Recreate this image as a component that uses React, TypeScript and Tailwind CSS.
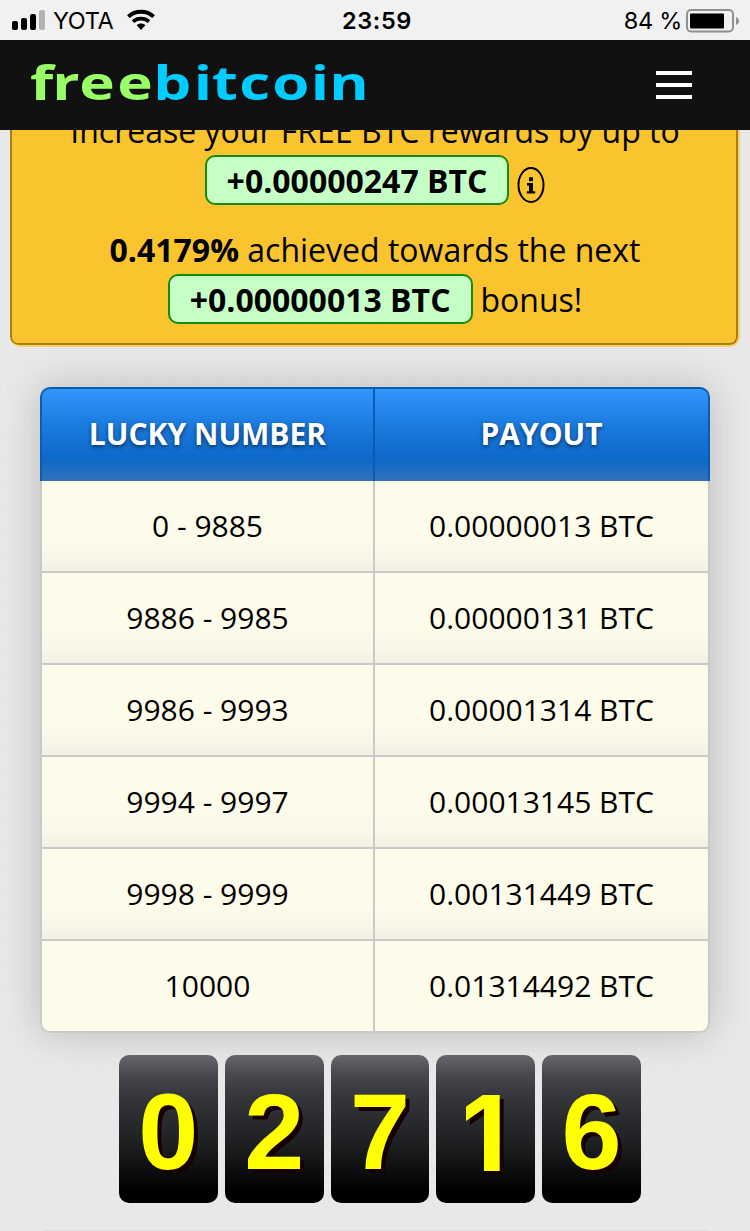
import React from "react";

const payouts: [string, string][] = [
  ["0 - 9885", "0.00000013 BTC"],
  ["9886 - 9985", "0.00000131 BTC"],
  ["9986 - 9993", "0.00001314 BTC"],
  ["9994 - 9997", "0.00013145 BTC"],
  ["9998 - 9999", "0.00131449 BTC"],
  ["10000", "0.01314492 BTC"],
];

const digits = ["0", "2", "7", "1", "6"];

function StatusBar() {
  return (
    <div className="grid h-10 shrink-0 grid-cols-3 items-center bg-[#f1f1f1] font-['Inter',sans-serif] text-[23.5px] text-black">
      <div className="flex items-center pl-3">
        <svg width="34" height="22" viewBox="0 0 34 22" className="shrink-0">
          <rect x="0" y="12" width="6" height="9" rx="2" />
          <rect x="9" y="9" width="6" height="12" rx="2" />
          <rect x="18" y="5" width="6" height="16" rx="2" />
          <rect x="27" y="1" width="6" height="20" rx="2" fill="#b3b3b3" />
        </svg>
        <span className="ml-[7px] w-[61px] pt-0.5 whitespace-nowrap tracking-[-0.4px]">YOTA</span>
        <svg width="30" height="22" viewBox="0 0 30 22" className="ml-3 shrink-0">
          <path d="M2.4 7.6C9.4 1.2 20.6 1.2 27.6 7.6" fill="none" stroke="#000" strokeWidth="3.9" />
          <path d="M7 12.6C11.5 8.7 18.5 8.7 23 12.6" fill="none" stroke="#000" strokeWidth="3.7" />
          <path d="M10.6 16.3C13 14 17 14 19.4 16.3L15 21Z" />
        </svg>
      </div>
      <div className="pt-0.5 pl-1 text-center font-semibold tracking-[0.6px]">23:59</div>
      <div className="flex items-center justify-end pr-2.5">
        <span className="mr-1 pt-0.5 whitespace-nowrap tracking-[-0.3px]">84 %</span>
        <svg width="54" height="24" viewBox="0 0 54 24" className="mt-0.5 shrink-0">
          <rect x="1" y="1" width="46" height="21.5" rx="4" fill="none" stroke="#909090" strokeWidth="2" />
          <rect x="4" y="4.5" width="34" height="15" rx="1" />
          <path d="M50 8C54 9.5 54 14.5 50 16Z" fill="#909090" />
        </svg>
      </div>
    </div>
  );
}

function Header() {
  return (
    <header className="flex h-[90px] shrink-0 items-center justify-between bg-[#111] pl-[30px] pr-[58px]">
      <svg
        width="345"
        height="80"
        viewBox="0 0 345 80"
        className="overflow-visible font-['Open_Sans',sans-serif] text-[47px] font-bold"
      >
        <g transform="scale(1.28 1)">
          <text x="0 17.4 38.5 68.2" y="55" fill="#99ff66">
            free
          </text>
          <text x="96.3 128 142 163.5 189.3 219.4 233.8" y="55" fill="#00ccff">
            bitcoin
          </text>
        </g>
      </svg>
      <div className="flex w-9 flex-col gap-2">
        <span className="h-1 bg-white" />
        <span className="h-1 bg-white" />
        <span className="h-1 bg-white" />
      </div>
    </header>
  );
}

function Badge({ children }: { children: React.ReactNode }) {
  return (
    <b className="flex h-[50px] items-center rounded-[10px] border-2 border-[#188a0c] bg-[#c6ffc6] px-5 pt-0.5">
      {children}
    </b>
  );
}

function BonusCard() {
  return (
    <section className="mx-2.5 h-[217px] shrink-0 overflow-hidden rounded-b-[10px] border-r-2 border-b-2 border-[#fcd068] bg-[#fcd068]">
      <div className="h-[215px] overflow-hidden rounded-b-[8px] border-2 border-t-0 border-[#a87f16] bg-[#fac42f] pl-0.5 text-[32px] text-black">
        <div className="-mt-[25px] flex h-[50px] items-center justify-center pt-0.5 whitespace-nowrap">
          Increase your FREE BTC rewards by up to
        </div>
        <div className="flex h-[50px] items-center justify-center gap-2">
          <Badge>+0.00000247 BTC</Badge>
          <svg width="28" height="36" viewBox="0 0 28 36" className="mt-2.5">
            <ellipse cx="14" cy="18" rx="12.5" ry="17" fill="none" stroke="#000" strokeWidth="2" />
            <path d="M12 10.2h4v4h-4zM10 16h6v8.2h2.2v2.3H9.8v-2.3H12v-5.8h-2z" />
          </svg>
        </div>
        <div className="mt-[19px] flex h-[50px] items-center justify-center pt-0.5 whitespace-pre">
          <b>0.4179%</b> achieved towards the next
        </div>
        <div className="flex h-[50px] items-center justify-center gap-2">
          <Badge>+0.00000013 BTC</Badge>
          <span className="pt-0.5">bonus!</span>
        </div>
      </div>
    </section>
  );
}

function PayoutTable() {
  return (
    <section className="mx-10 mt-10 shrink-0 rounded-[10px] text-[30px] text-black shadow-[0_0_40px_rgba(0,0,0,0.2)]">
      <div className="grid h-[94px] grid-cols-[333px_333px] rounded-t-[10px] border-2 border-b-0 border-[#0b5cb0] bg-[linear-gradient(180deg,#3396fb_0%,#1b7ce0_38%,#0d68c8_76%,#3173ba_100%)] font-bold text-white [text-shadow:0_2px_4px_rgba(0,0,0,0.55)]">
        <div className="flex items-center justify-center border-r-2 border-[#0b5cb0] pb-1">LUCKY NUMBER</div>
        <div className="flex items-center justify-center pb-1">PAYOUT</div>
      </div>
      <div className="overflow-hidden rounded-b-[10px] border-x-2 border-b-2 border-[#c9c9c9]">
        {payouts.map(([range, amount], i) => (
          <div
            key={range}
            className={
              i === payouts.length - 1
                ? "grid h-[90px] grid-cols-[333px_333px] bg-[#fdfbea]"
                : "grid h-[92px] grid-cols-[333px_333px] border-b-2 border-[#c9c9c9] bg-[#fdfbea] bg-[linear-gradient(180deg,#fdfbea_0%,#fdfbea_60%,#f9f7e8_85%,#f2f0e3_100%)]"
            }
          >
            <div className="flex items-center justify-center border-r-2 border-[#c9c9c9] pb-0.5">{range}</div>
            <div className="flex items-center justify-center pb-0.5">{amount}</div>
          </div>
        ))}
      </div>
    </section>
  );
}

function Roll() {
  return (
    <div className="mt-[22px] ml-[119px] grid w-[522px] shrink-0 grid-cols-5 gap-[7px] font-['Liberation_Sans',sans-serif] text-[108px] leading-none font-bold text-[#ffff00]">
      {digits.map((d, i) => (
        <div
          key={i}
          className="flex h-[148px] items-center justify-center rounded-[10px] bg-[linear-gradient(180deg,#66676c_0%,#45474c_14%,#35373c_27%,#1d1f21_60%,#000_92%)] pt-1.5 [text-shadow:4px_4px_0_#170000]"
        >
          {d === "1" ? <span className="pr-1 font-['Inter',sans-serif] text-[105px] leading-none">{d}</span> : d}
        </div>
      ))}
    </div>
  );
}

export default function App() {
  return (
    <div className="flex h-[1231px] w-[750px] flex-col overflow-hidden bg-[#e9e9e9] bg-[linear-gradient(rgba(0,0,0,0.008)_1px,transparent_1px),linear-gradient(90deg,rgba(0,0,0,0.008)_1px,transparent_1px)] bg-[size:6px_6px] font-['Open_Sans',sans-serif]">
      <StatusBar />
      <Header />
      <BonusCard />
      <PayoutTable />
      <Roll />
      <div className="mx-10 mt-[27px] h-4 shrink-0 rounded-t-md bg-[#dcdcdc]" />
    </div>
  );
}
